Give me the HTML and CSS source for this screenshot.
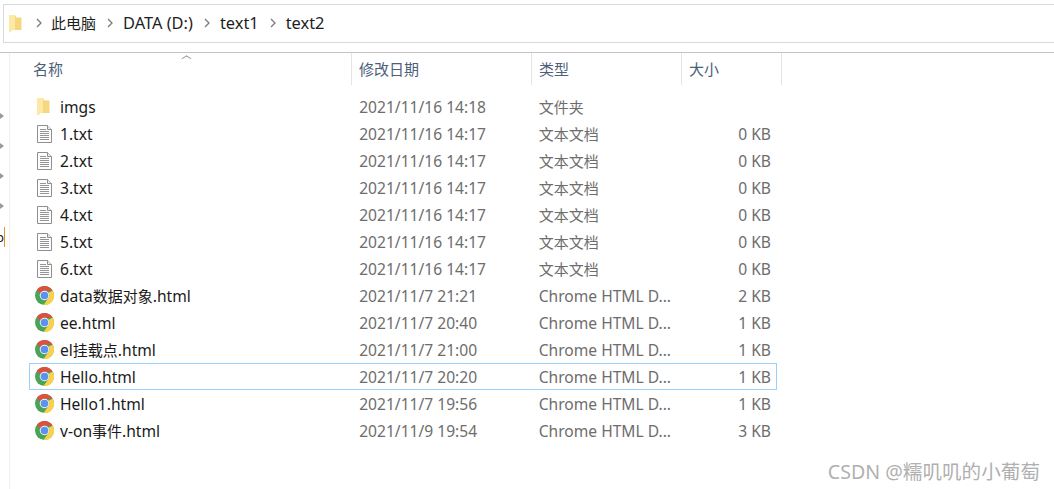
FILE: index.html
```html
<!DOCTYPE html>
<html lang="zh">
<head>
<meta charset="utf-8">
<title>text2</title>
<link rel="stylesheet" href="styles.css">
</head>
<body>
<svg class="defs" width="0" height="0">
  <defs>
    <symbol id="folder" viewBox="0 0 13 18">
      <path d="M0 0h6l1.500 2.500h5V15H3l-1 1.500-2 1z" fill="#f6d67e"/>
      <path d="M0 0h6v14.500L2 15.500v1L0 17.500z" fill="#fce9a6"/>
    </symbol>
    <symbol id="doc" viewBox="0 0 15 18">
      <path d="M.5.500h10l4 4v13H.5z" fill="#fdfdfd" stroke="#8f8f8f"/>
      <path d="M10.500.500v4h4" fill="#eeeeee" stroke="#8f8f8f"/>
      <path d="M3 4.500h6M3 6.500h9M3 8.500h9M3 10.500h9M3 12.500h9M3 14.500h9" stroke="#959595" fill="none"/>
    </symbol>
    <symbol id="chrome" viewBox="0 0 20 20">
      <circle cx="10" cy="10" r="10" fill="#4aa457"/>
      <path d="M10 0a10 10 0 0 1 8.660 5H10a5 5 0 0 0-4.600 3L1.900 4.100A10 10 0 0 1 10 0z" fill="#dc4f41"/>
      <path d="M18.660 5A10 10 0 0 1 9 19.950L13.900 13A5 5 0 0 0 14 7L18.660 5z" fill="#fbd14b"/>
      <circle cx="10" cy="10" r="5" fill="#f4f4f4"/>
      <circle cx="10" cy="10" r="4" fill="#5b92ef"/>
    </symbol>
  </defs>
</svg>

<nav class="address">
  <svg class="address-folder"><use href="#folder"/></svg>
  <svg class="crumb-sep" viewBox="0 0 6 10"><path d="M1 1l4 4-4 4" fill="none" stroke="#7a7a7a" stroke-width="1.300"/></svg>
  <span class="crumb crumb-zh">此电脑</span>
  <svg class="crumb-sep" viewBox="0 0 6 10"><path d="M1 1l4 4-4 4" fill="none" stroke="#7a7a7a" stroke-width="1.300"/></svg>
  <span class="crumb">DATA (D:)</span>
  <svg class="crumb-sep" viewBox="0 0 6 10"><path d="M1 1l4 4-4 4" fill="none" stroke="#7a7a7a" stroke-width="1.300"/></svg>
  <span class="crumb">text1</span>
  <svg class="crumb-sep" viewBox="0 0 6 10"><path d="M1 1l4 4-4 4" fill="none" stroke="#7a7a7a" stroke-width="1.300"/></svg>
  <span class="crumb">text2</span>
</nav>

<div class="pane">
  <aside class="tree">
    <i class="tree-arrow a1"></i><i class="tree-arrow a2"></i><i class="tree-arrow a3"></i><i class="tree-arrow a4"></i>
    <span class="tree-clip">p</span>
  </aside>
  <main class="list">
    <div class="head">
      <span class="sort"></span>
      <div class="hcell c-name">名称</div>
      <div class="hcell c-date">修改日期</div>
      <div class="hcell c-type">类型</div>
      <div class="hcell c-size">大小</div>
    </div>
    <div class="rows">
      <div class="row"><svg class="ico folder"><use href="#folder"/></svg><span class="name">imgs</span><span class="date">2021/11/16 14:18</span><span class="type zh">文件夹</span><span class="size"></span></div>
      <div class="row"><svg class="ico doc"><use href="#doc"/></svg><span class="name">1.txt</span><span class="date">2021/11/16 14:17</span><span class="type zh">文本文档</span><span class="size">0 KB</span></div>
      <div class="row"><svg class="ico doc"><use href="#doc"/></svg><span class="name">2.txt</span><span class="date">2021/11/16 14:17</span><span class="type zh">文本文档</span><span class="size">0 KB</span></div>
      <div class="row"><svg class="ico doc"><use href="#doc"/></svg><span class="name">3.txt</span><span class="date">2021/11/16 14:17</span><span class="type zh">文本文档</span><span class="size">0 KB</span></div>
      <div class="row"><svg class="ico doc"><use href="#doc"/></svg><span class="name">4.txt</span><span class="date">2021/11/16 14:17</span><span class="type zh">文本文档</span><span class="size">0 KB</span></div>
      <div class="row"><svg class="ico doc"><use href="#doc"/></svg><span class="name">5.txt</span><span class="date">2021/11/16 14:17</span><span class="type zh">文本文档</span><span class="size">0 KB</span></div>
      <div class="row"><svg class="ico doc"><use href="#doc"/></svg><span class="name">6.txt</span><span class="date">2021/11/16 14:17</span><span class="type zh">文本文档</span><span class="size">0 KB</span></div>
      <div class="row"><svg class="ico chrome"><use href="#chrome"/></svg><span class="name">data<span class="zh">数据对象</span>.html</span><span class="date">2021/11/7 21:21</span><span class="type">Chrome HTML D...</span><span class="size">2 KB</span></div>
      <div class="row"><svg class="ico chrome"><use href="#chrome"/></svg><span class="name">ee.html</span><span class="date">2021/11/7 20:40</span><span class="type">Chrome HTML D...</span><span class="size">1 KB</span></div>
      <div class="row"><svg class="ico chrome"><use href="#chrome"/></svg><span class="name">el<span class="zh">挂载点</span>.html</span><span class="date">2021/11/7 21:00</span><span class="type">Chrome HTML D...</span><span class="size">1 KB</span></div>
      <div class="row selected"><svg class="ico chrome"><use href="#chrome"/></svg><span class="name">Hello.html</span><span class="date">2021/11/7 20:20</span><span class="type">Chrome HTML D...</span><span class="size">1 KB</span></div>
      <div class="row"><svg class="ico chrome"><use href="#chrome"/></svg><span class="name">Hello1.html</span><span class="date">2021/11/7 19:56</span><span class="type">Chrome HTML D...</span><span class="size">1 KB</span></div>
      <div class="row"><svg class="ico chrome"><use href="#chrome"/></svg><span class="name">v-on<span class="zh">事件</span>.html</span><span class="date">2021/11/9 19:54</span><span class="type">Chrome HTML D...</span><span class="size">3 KB</span></div>
    </div>
  </main>
</div>
<div class="watermark">CSDN @糯叽叽的小葡萄</div>
</body>
</html>
```

FILE: styles.css
```css
* { box-sizing: border-box; }
html, body { margin: 0; height: 100%; overflow: hidden; }
body {
  background: #fff;
  font-family: "Noto Sans", "Noto Sans CJK SC", sans-serif;
  font-size: 15.6px;
  color: #1a1a1a;
  position: relative;
  padding-top: 4px;
}
.defs { position: absolute; }
.zh { font-size: 15px; }

.address {
  margin-left: 3px;
  height: 39px;
  border: 1px solid #d9d9d9;
  border-right: 0;
  display: flex;
  align-items: center;
  padding-left: 5px;
  padding-bottom: 2px;
  color: #1e1e1e;
  font-size: 16.4px;
}
.address-folder { width: 13px; height: 18px; margin-right: 14px; margin-top: 2px; }
.crumb-sep { width: 6px; height: 10px; flex: none; }
.crumb { margin: 0 11px 0 10px; }
.crumb-zh { font-size: 15px; margin-left: 9px; }

.pane {
  margin-top: 9px;
  border-top: 1px solid #c4c4c4;
  display: flex;
  height: 437px;
}
.tree {
  width: 10px;
  border-right: 1px solid #efefef;
  flex: none;
  position: relative;
  overflow: hidden;
}
.tree-arrow {
  position: absolute;
  left: 0;
  width: 0;
  height: 0;
  border-left: 4px solid #9a9a9a;
  border-top: 3px solid transparent;
  border-bottom: 3px solid transparent;
}
.a1 { top: 60px; }
.a2 { top: 90px; }
.a3 { top: 120px; }
.a4 { top: 150px; }
.tree-clip {
  position: absolute;
  left: -4px;
  top: 174px;
  border-right: 1px solid #e8912d;
  line-height: 20px;
  font-size: 13px;
}

.list { flex: 1; padding-left: 20px; min-width: 0; }
.head {
  display: flex;
  height: 32px;
  position: relative;
  color: #4c607a;
  font-size: 15px;
}
.sort {
  position: absolute;
  left: 153px;
  top: 1px;
  width: 7px;
  height: 7px;
  border-left: 1px solid #8a8a8a;
  border-top: 1px solid #8a8a8a;
  transform: translateY(1px) scaleY(.6) rotate(45deg);
}
.hcell {
  height: 32px;
  display: flex;
  align-items: center;
  border-right: 1px solid #e5e5e5;
  padding-bottom: 2px;
  padding-left: 7px;
}
.hcell.c-name { width: 322px; padding-left: 3px; }
.hcell.c-date { width: 180px; }
.hcell.c-type { width: 150px; }
.hcell.c-size { width: 100px; }

.rows { margin-top: 8px; }
.row {
  height: 27px;
  margin-left: -1px;
  width: 748px;
  display: flex;
  align-items: center;
  padding: 0 5px;
  border: 1px solid transparent;
}
.row.selected { border-color: #99d1ff; }
.ico { flex: none; }
.ico.folder { width: 13px; height: 18px; margin: 0 10px 0 2px; }
.ico.doc { width: 15px; height: 18px; margin: 0 8px 0 2px; }
.ico.chrome { width: 19px; height: 19px; margin: 0 6px 0 0; }
.name { width: 300px; white-space: nowrap; }
.date { width: 180px; color: #6d6d6d; white-space: nowrap; }
.type { width: 140px; color: #6d6d6d; white-space: nowrap; }
.size { width: 93px; text-align: right; color: #6d6d6d; }

.watermark {
  position: absolute;
  right: 14px;
  top: 456px;
  font-size: 19.6px;
  color: #b0b0b0;
}
```
